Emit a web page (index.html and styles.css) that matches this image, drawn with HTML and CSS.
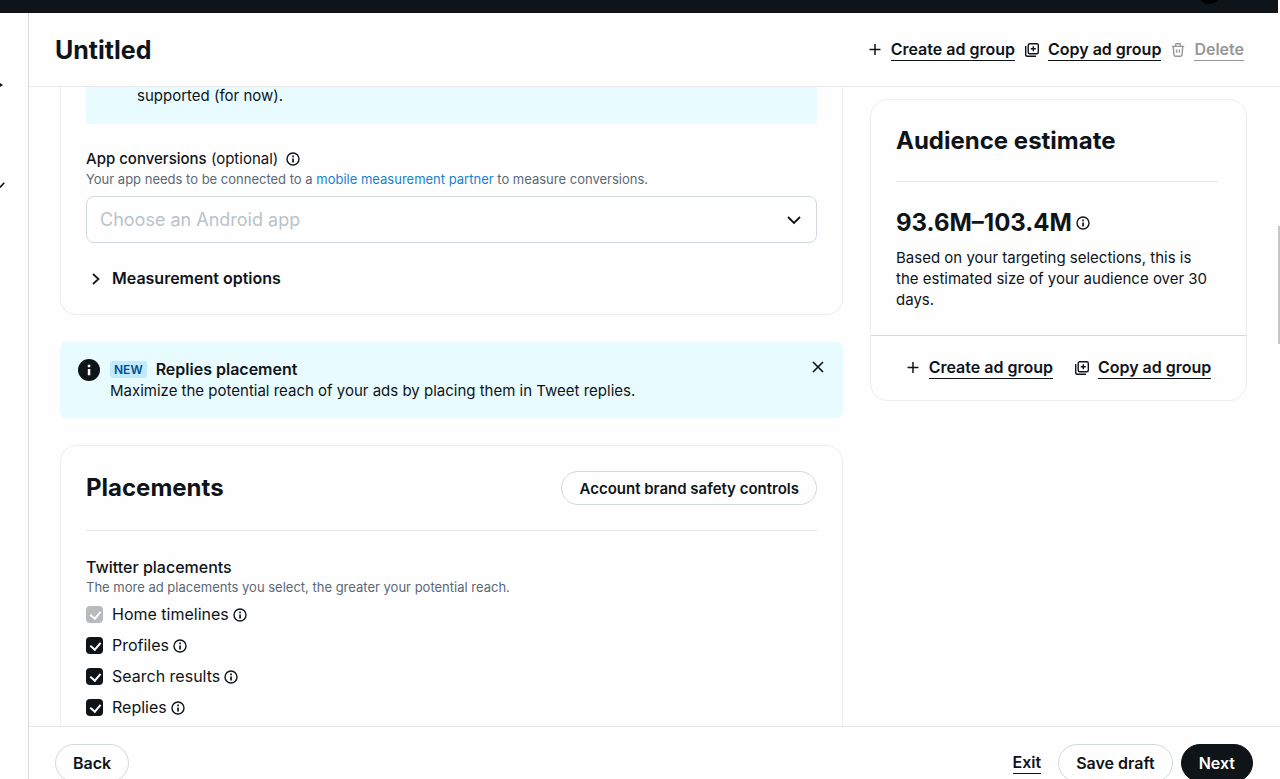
FILE: index.html
```html
<!DOCTYPE html>
<html lang="en">
<head>
<meta charset="utf-8">
<title>Untitled ad group</title>
<meta name="viewport" content="width=device-width, initial-scale=1">
<link rel="stylesheet" href="styles.css">
</head>
<body>
<svg class="sprite" aria-hidden="true">
  <symbol id="info" viewBox="0 0 14 14"><circle cx="7" cy="7" r="6" fill="none" stroke="currentColor" stroke-width="1.4"/><path d="M6.2 3.6h1.7v1.7H6.2zM6.2 6.4h1.7v4H6.2z" fill="currentColor"/></symbol>
  <symbol id="plus" viewBox="0 0 14 14"><path d="M7 1v11M1.5 6.5h11" stroke="currentColor" stroke-width="1.5"/></symbol>
  <symbol id="copy" viewBox="0 0 14 14"><rect x="3.2" y="0.7" width="10.1" height="10.1" rx="1.5" fill="none" stroke="currentColor" stroke-width="1.4"/><path d="M0.7 3v8.5q0 1.8 1.8 1.8H11M8.3 3.3v5M5.8 5.8h5" fill="none" stroke="currentColor" stroke-width="1.4"/></symbol>
  <symbol id="trash" viewBox="0 0 14 14"><path d="M.8 3.4h12.4M4.5 3.2V2Q4.5.8 5.7.8h2.6Q9.5.8 9.5 2v1.2M2.3 3.6l.6 8.2q.1 1.4 1.5 1.4h5.2q1.4 0 1.5-1.4l.6-8.2M5.6 6.4v3.4M8.4 6.4v3.4" fill="none" stroke="currentColor" stroke-width="1.4"/></symbol>
</svg>
<div class="app">
  <div class="topbar"><span class="avatar"></span></div>
  <div class="shell">
    <nav class="rail" aria-label="Campaign">
      <svg class="rail-dot" viewBox="0 0 4 6"><path d="M0 1l3 2-3 2z" fill="#0f1419"/></svg>
      <svg class="rail-check" viewBox="0 0 5 8"><path d="M0 6.5l4.2-4.7" stroke="#0f1419" stroke-width="1.6"/></svg>
    </nav>
    <main class="main">
      <header class="header">
        <h1 class="title page-title">Untitled</h1>
        <div class="actions">
          <a class="action" href="#"><svg class="icon"><use href="#plus"/></svg><span class="action-text">Create ad group</span></a>
          <a class="action" href="#"><svg class="icon"><use href="#copy"/></svg><span class="action-text">Copy ad group</span></a>
          <a class="action action-off" href="#"><svg class="icon"><use href="#trash"/></svg><span class="action-text">Delete</span></a>
        </div>
      </header>
      <div class="content">
        <div class="column">
          <section class="card card-open">
            <p class="notice">supported (for now).</p>
            <div class="field-label"><label for="app"><b>App conversions</b> (optional)</label><svg class="icon"><use href="#info"/></svg></div>
            <p class="hint">Your app needs to be connected to a <a class="link" href="#">mobile measurement partner</a> to measure conversions.</p>
            <div class="select-wrap">
              <select class="select" id="app"><option>Choose an Android app</option></select>
              <svg class="select-arrow" viewBox="0 0 14 10"><path d="M1 2l6 6 6-6" fill="none" stroke="#0f1419" stroke-width="1.8"/></svg>
            </div>
            <button class="expander" type="button"><svg class="expander-arrow" viewBox="0 0 8 12"><path d="M1 1l5.5 5L1 11" fill="none" stroke="#0f1419" stroke-width="1.7"/></svg>Measurement options</button>
          </section>
          <section class="banner">
            <svg class="banner-icon" viewBox="0 0 22 22"><circle cx="11" cy="11" r="11" fill="#0f1419"/><path d="M9.8 5.7h2.5v2.5H9.8zM9.8 10h2.5v6.2H9.8z" fill="#fff"/></svg>
            <div class="banner-body">
              <h2 class="banner-title"><span class="tag">NEW</span>Replies placement</h2>
              <p class="banner-text">Maximize the potential reach of your ads by placing them in Tweet replies.</p>
            </div>
            <button class="close" type="button" aria-label="Dismiss"><svg class="close-icon" viewBox="0 0 12 12"><path d="M1 1l10 10M11 1L1 11" stroke="#0f1419" stroke-width="1.7"/></svg></button>
          </section>
          <section class="card placements">
            <div class="card-head">
              <h2 class="title">Placements</h2>
              <button class="pill pill-small" type="button">Account brand safety controls</button>
            </div>
            <h3 class="subhead">Twitter placements</h3>
            <p class="hint">The more ad placements you select, the greater your potential reach.</p>
            <div class="options">
              <label class="option"><input class="check" type="checkbox" checked disabled><span>Home timelines</span><svg class="icon"><use href="#info"/></svg></label>
              <label class="option"><input class="check" type="checkbox" checked><span>Profiles</span><svg class="icon"><use href="#info"/></svg></label>
              <label class="option"><input class="check" type="checkbox" checked><span>Search results</span><svg class="icon"><use href="#info"/></svg></label>
              <label class="option"><input class="check" type="checkbox" checked><span>Replies</span><svg class="icon"><use href="#info"/></svg></label>
            </div>
          </section>
        </div>
        <aside class="estimate">
          <div class="estimate-body">
            <h2 class="title estimate-title">Audience estimate</h2>
            <div class="figure"><strong class="title">93.6M–103.4M</strong><svg class="icon"><use href="#info"/></svg></div>
            <p class="estimate-text">Based on your targeting selections, this is the estimated size of your audience over 30 days.</p>
          </div>
          <div class="estimate-foot">
            <a class="action" href="#"><svg class="icon"><use href="#plus"/></svg><span class="action-text">Create ad group</span></a>
            <a class="action" href="#"><svg class="icon"><use href="#copy"/></svg><span class="action-text">Copy ad group</span></a>
          </div>
        </aside>
      </div>
      <footer class="footer">
        <button class="pill" type="button">Back</button>
        <div class="footer-end">
          <a class="action" href="#"><span class="action-text">Exit</span></a>
          <button class="pill" type="button">Save draft</button>
          <button class="pill pill-dark" type="button">Next</button>
        </div>
      </footer>
    </main>
  </div>
  <div class="scroll-thumb"></div>
</div>
</body>
</html>
```
FILE: styles.css
```css
* { box-sizing: border-box; }
html, body { height: 100%; }
body {
  margin: 0;
  overflow: hidden;
  background: #fefefe;
  color: #0f1419;
  font: 15px/21px Inter, "Noto Sans", sans-serif;
}
h1, h2, h3, p { margin: 0; }
button, select { font: inherit; color: inherit; }
.sprite { display: none; }

/* The footer continues below the fold */
.app { display: flex; flex-direction: column; height: calc(100% + 20px); }
.topbar { position: relative; flex: none; height: 13px; margin-right: 2px; background: #0f1419; overflow: hidden; }
.avatar { position: absolute; right: 58px; bottom: 9px; width: 22px; height: 22px; border-radius: 50%; background: #000; }
.shell { display: flex; flex: 1; min-height: 0; }
.rail { position: relative; flex: none; width: 29px; border-right: 1px solid #d9dddf; }
.rail-dot { position: absolute; left: 0; top: 69px; width: 4px; height: 6px; }
.rail-check { position: absolute; left: 0; top: 168px; width: 5px; height: 8px; }
.main { display: flex; flex: 1; flex-direction: column; min-width: 0; }
.scroll-thumb { position: absolute; right: 0; top: 226px; width: 2px; height: 118px; background: #c4c6c7; }

.header {
  display: flex; align-items: center; justify-content: space-between;
  flex: none; height: 74px; padding: 0 36px 0 26px;
  border-bottom: 1px solid #e8eaeb;
}
.title { font-size: 24px; line-height: 32px; font-weight: 700; }
.page-title { font-size: 25px; }
.actions { display: flex; gap: 10px; }
.action { display: flex; align-items: center; gap: 9px; color: inherit; font-size: 16px; font-weight: 600; text-decoration: none; }
.action-text { border-bottom: 1px solid #0f1419; }
.action-off { color: #959799; }
.action-off .action-text { border-color: #959799; }
.icon { flex: none; width: 14px; height: 14px; }

.content {
  display: grid; grid-template-columns: minmax(0, 1fr) 377px; gap: 27px;
  flex: 1; min-height: 0; padding: 0 33px 0 31px; overflow: hidden;
}
.card { padding: 25px; border: 1px solid #eceeef; border-radius: 16px; }
.card-open { padding-top: 0; border-top: 0; border-radius: 0 0 16px 16px; }
.notice { height: 37px; margin-bottom: 25px; padding: 0 51px; border-radius: 0 0 4px 4px; background: #e8fbff; line-height: 18px; }
.field-label { display: flex; align-items: center; gap: 8px; line-height: 20px; }
.field-label b { font-weight: 500; }
.subhead { font-size: 16px; line-height: 20px; font-weight: 500; }
.hint { color: #5b6873; font-size: 13px; line-height: 20px; }
.link { color: #1a7fd0; text-decoration: none; }
.select-wrap { position: relative; margin-top: 7px; }
.select {
  display: block; width: 100%; height: 47px; padding: 0 40px 0 13px; appearance: none;
  border: 1px solid #d2d9dc; border-radius: 8px; background: #fefefe; color: #b9c3c9; font-size: 18px;
}
.select-arrow { position: absolute; right: 16px; top: 19px; width: 14px; height: 10px; pointer-events: none; }
.expander { display: flex; align-items: center; gap: 12px; margin-top: 25px; padding: 0 0 0 6px; border: 0; background: none; font-size: 16px; font-weight: 600; }
.expander-arrow { width: 8px; height: 12px; }

.banner { display: flex; gap: 10px; margin: 27px 0; padding: 17px 18px; border-radius: 6px; background: #e8fbff; }
.banner-icon { flex: none; width: 22px; height: 22px; }
.banner-body { flex: 1; }
.banner-title { display: flex; align-items: center; gap: 9px; font-size: 16px; line-height: 21px; font-weight: 600; }
.tag { padding: 0 4px; border-radius: 3px; background: #c0eaff; color: #004f91; font-size: 12px; line-height: 17px; }
.close { align-self: flex-start; padding: 2px 1px; border: 0; background: none; }
.close-icon { display: block; width: 12px; height: 12px; }

.card-head { display: flex; align-items: center; justify-content: space-between; margin-bottom: 26px; padding-bottom: 25px; border-bottom: 1px solid #e8eaeb; }
.pill { height: 38px; padding: 0 17px; border: 1px solid #d2d9dc; border-radius: 19px; background: #fefefe; font-size: 16px; font-weight: 600; }
.pill-small { height: 34px; font-size: 15px; }
.pill-dark { border-color: #0f1419; background: #0f1419; color: #fff; }
.options { display: grid; gap: 10px; margin-top: 7px; font-size: 16px; }
.option { display: flex; align-items: center; gap: 4px; }
.check { position: relative; appearance: none; width: 17px; height: 17px; margin: 0 5px 0 0; border-radius: 4px; background: #0f1419; }
.check::after { content: ""; position: absolute; left: 6px; top: 3px; width: 5px; height: 8px; border: solid #fff; border-width: 0 2px 2px 0; transform: rotate(40deg); }
.check:disabled { background: #b9babb; }

.estimate { align-self: start; margin-top: 12px; border: 1px solid #eceeef; border-radius: 18px; }
.estimate-body { padding: 25px 28px 25px 25px; }
.estimate-title { margin-bottom: 25px; padding-bottom: 24px; border-bottom: 1px solid #e8eaeb; }
.figure { display: flex; align-items: center; gap: 4px; margin-bottom: 8px; }
.estimate-text { max-width: 320px; line-height: 21px; }
.estimate-foot { display: flex; justify-content: center; gap: 22px; padding: 21px 0; border-top: 1px solid #d2d9dc; }

.footer { display: flex; align-items: flex-start; justify-content: space-between; flex: none; height: 73px; padding: 17px 27px 0 26px; border-top: 1px solid #e2e5e6; }
.footer-end { display: flex; align-items: center; gap: 8px; }
.footer-end .action { margin-right: 9px; }
```
